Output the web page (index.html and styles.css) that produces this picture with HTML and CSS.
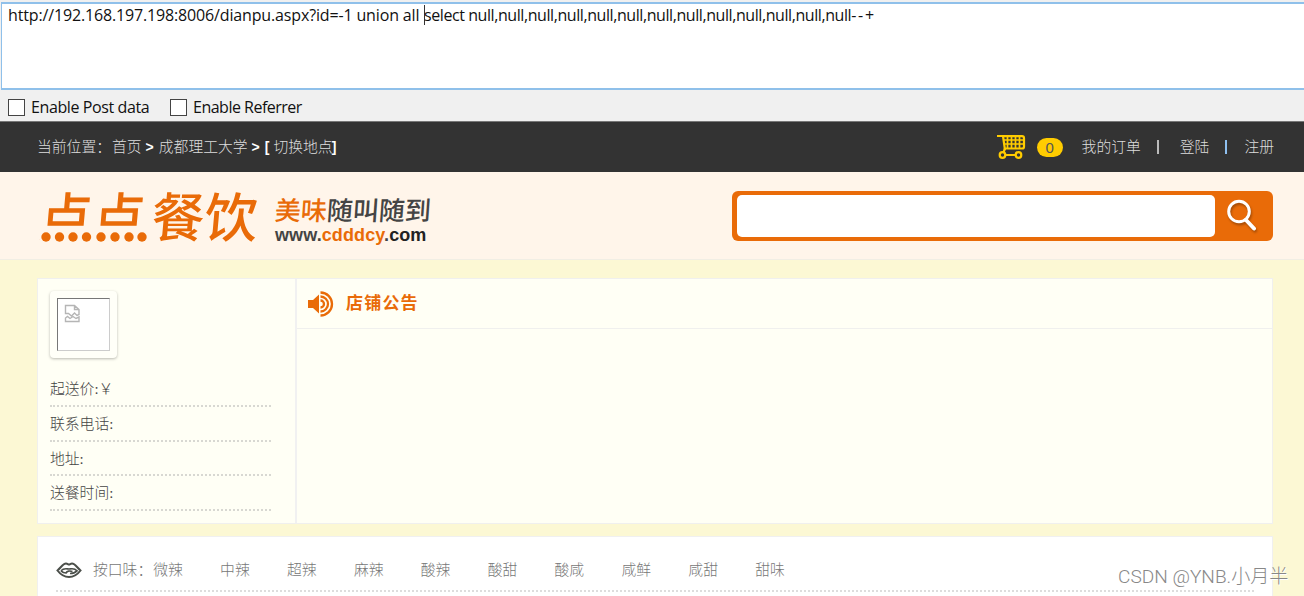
FILE: index.html
```html
<!DOCTYPE html>
<html lang="zh-CN">
<head>
  <meta charset="UTF-8" />
  <meta name="viewport" content="width=device-width, initial-scale=1.0"/>
  <title>点点餐饮</title>
  <link rel="stylesheet" href="styles.css">
</head>
<body>
  <div class="toolbar">
    <div class="url-box"><span class="url-start">http://192.168.197.198:8006/dianpu.aspx?id=-1 union all </span><span class="caret"></span><span class="url-end">select null,null,null,null,null,null,null,null,null,null,null,null,null<span class="dashes">--+</span></span></div>
    <div class="options">
      <label class="option post"><span class="box"></span>Enable Post data</label>
      <label class="option referrer"><span class="box"></span>Enable Referrer</label>
    </div>
  </div>

  <div class="topbar">
    <div class="crumbs">当前位置：<a class="home">首页</a><b>&gt;</b><a>成都理工大学</a><b>&gt;</b><b class="bracket">[</b><a>切换地点</a><b class="bracket-end">]</b></div>
    <div class="account">
      <svg class="cart" width="30" height="26" viewBox="0 0 30 26" fill="none" stroke="#fc0">
        <path d="M1 2h6l2 14M6 2.200h20q2 0 2 2v8.500q0 1.800-2 1.800H9" stroke-width="2.200"/>
        <path d="M11.500 3v11M15.500 3v11M19.500 3v11M23.500 3v11M8 6h19M8 10h19" stroke-width="1.700"/>
        <path d="M9 14.500l-1.500 4M9 21h11" stroke-width="2.200"/>
        <circle cx="6.500" cy="21" r="2.800" stroke-width="2.200"/>
        <circle cx="22.500" cy="21" r="2.800" stroke-width="2.200"/>
      </svg>
      <span class="count">0</span>
      <a class="orders">我的订单</a>
      <i class="sep"></i>
      <a class="login">登陆</a>
      <i class="sep blue"></i>
      <a>注册</a>
    </div>
  </div>

  <div class="header">
    <div class="logo">
      <div class="brand">
        <span class="dian">点点</span>
        <span class="canyin">餐饮</span>
        <svg class="dots" width="112" height="18" viewBox="0 0 112 18" fill="#e96b08">
          <circle cx="6" cy="9" r="4.700"/><circle cx="19.500" cy="9" r="4.700"/><circle cx="33" cy="9" r="4.700"/><circle cx="46.500" cy="9" r="4.700"/>
          <circle cx="61" cy="9" r="4.700"/><circle cx="75" cy="9" r="4.700"/><circle cx="89" cy="9" r="4.700"/><circle cx="102" cy="9" r="4.700"/>
        </svg>
      </div>
      <div class="slogan">
        <div class="words"><em>美味</em>随叫随到</div>
        <div class="site">www.<em>cdddcy</em>.<b>com</b></div>
      </div>
    </div>
    <div class="search">
      <div class="field"></div>
      <svg class="glass" width="40" height="40" viewBox="0 0 40 40" fill="none" stroke="#fff">
        <circle cx="14" cy="16.500" r="10.300" stroke-width="3"/>
        <path d="M21 25l8 8.500" stroke-width="4" stroke-linecap="round"/>
      </svg>
    </div>
  </div>

  <div class="shop">
    <div class="info">
      <div class="photo">
        <div class="frame">
          <svg width="17" height="19" viewBox="0 0 17 19" fill="none" stroke="#b5b5b5" stroke-width="1.400">
            <path d="M1.500 9.500V1.500h9l4.500 4v5l-2 1-2.500-2.500-3 3-3-2.500zM10.500 1.500v4H15"/>
            <path d="M1.500 14l2-1.500 2.500 2 3-2 3 2 3-1.500v4.500H1.500z"/>
          </svg>
        </div>
      </div>
      <div class="line">起送价:￥</div>
      <div class="line">联系电话:</div>
      <div class="line">地址:</div>
      <div class="line">送餐时间:</div>
    </div>
    <div class="notice">
      <div class="notice-title">
        <svg width="28" height="26" viewBox="0 0 28 26" fill="none" stroke="#e96b08">
          <path d="M1 9h5l6-5.500v19L6 17H1z" fill="#e96b08" stroke="none"/>
          <path d="M13.500 9.500a3.500 3.500 0 0 1 0 7M13.500 5.500a7.500 7.500 0 0 1 0 15M13.500 1.500a11.500 11.500 0 0 1 0 23" stroke-width="2.300"/>
        </svg>
        <span>店铺公告</span>
      </div>
    </div>
  </div>

  <div class="tastes">
    <div class="taste-row">
      <svg class="lips" width="26" height="20" viewBox="0 0 26 20" fill="none" stroke="#4b4f4a">
        <path d="M1.500 10.500C5 7.500 7 3.500 10 3.500c1.500 0 2 1 3 1s1.500-1 3-1c3 0 5 4 8.500 7-3 4-7 6.500-11.500 6.500S4.500 14.500 1.500 10.500z" stroke-width="2"/>
        <path d="M5 10.800C8 7.500 11 9 13 9s5-1.500 8 1.800c-2 2-4 2.700-7 2.700M5 10.800c2 2 3 2.200 5 2.200 1-2 4-2.500 6.500-1.500" stroke-width="1.700"/>
      </svg>
      <span class="taste-label">按口味：</span>
      <div class="taste-list"><a>微辣</a><a>中辣</a><a>超辣</a><a>麻辣</a><a>酸辣</a><a>酸甜</a><a>酸咸</a><a>咸鲜</a><a>咸甜</a><a>甜味</a></div>
    </div>
  </div>
  <div class="watermark">CSDN @YNB.小月半</div>
</body>
</html>
```
FILE: styles.css
```css
* {
  box-sizing: border-box;
}

body {
  margin: 0;
  height: 596px;
  overflow: hidden;
  position: relative;
  background: #fcf8d4;
  color: #444;
  font: 300 14.8px/20px "Liberation Serif", "Noto Sans CJK SC", serif;
}

svg {
  display: block;
  flex: none;
}

em, i {
  font-style: normal;
}

/* url panel */
.toolbar {
  height: 122px;
  padding: 2px 0 0 1px;
  background: #f0f0f0;
  border-bottom: 1px solid #777;
  color: #111;
  font: 400 16px/22px "Open Sans", sans-serif;
}

.url-box {
  display: flex;
  height: 88px;
  padding: 0 0 0 6px;
  background: #fff;
  border: 2px solid #8fc0ea;
  border-left-width: 1px;
  border-right: 0;
  white-space: pre;
}

.url-start {
  width: 416px;
  letter-spacing: -0.15px;
}

.url-end {
  letter-spacing: -0.42px;
}

.dashes {
  letter-spacing: 1.8px;
}

.caret {
  width: 1px;
  height: 20px;
  margin: 1px -1px 0 0;
  background: #333;
}

.options {
  display: flex;
  padding: 6px 0 0 7px;
  letter-spacing: -0.4px;
}

.option {
  display: flex;
  align-items: center;
  gap: 6px;
}

.post {
  width: 162px;
}

.referrer {
  letter-spacing: -0.5px;
}

.box {
  width: 17px;
  height: 17px;
  background: #fff;
  border: 1px solid #444;
}

/* dark bar */
.topbar {
  display: flex;
  justify-content: space-between;
  height: 50px;
  padding: 0 30px 0 37px;
  background: #333;
  color: #ddd;
  align-items: center;
}

.crumbs {
  display: flex;
}

.crumbs .home {
  margin-left: 1px;
}

.crumbs b {
  margin: 0 5px 0 4px;
  color: #fff;
  font: 700 14px/20px "Liberation Sans", sans-serif;
}

.crumbs .bracket {
  margin-left: 0;
  margin-right: 4px;
}

.crumbs .bracket-end {
  margin: 0 0 0 -1px;
}

.account {
  display: flex;
  align-items: center;
}

.count {
  width: 26px;
  height: 19px;
  margin: 0 19px 0 11px;
  border-radius: 10px;
  background: #fc0;
  color: #555;
  font: 400 15px/19px "Liberation Sans", sans-serif;
  text-align: center;
}

.orders {
  margin-right: 16px;
}

.sep {
  width: 2px;
  height: 14px;
  margin-right: 21px;
  background: #bbb;
}

.sep.blue {
  margin: 0 17px 0 16px;
  background: #8fc0f0;
}

/* logo and search */
.header {
  display: flex;
  justify-content: space-between;
  height: 88px;
  padding: 19px 31px 0 40px;
  background: #fff5ea;
  border-bottom: 1px solid #f1eee4;
}

.logo {
  display: flex;
  gap: 15px;
  color: #e96b08;
  font-family: "Noto Sans CJK SC", sans-serif;
}

.brand {
  display: flex;
  position: relative;
  width: 220px;
  height: 52px;
  margin-top: -3px;
  font-size: 53px;
  font-weight: 500;
  line-height: 52px;
}

.dian {
  width: 112px;
}

.dian,
.canyin {
  display: block;
  transform: skewX(-5deg);
}

.dots {
  position: absolute;
  left: 0;
  top: 40px;
  background: #fff5ea;
}

.slogan {
  padding-top: 3px;
  color: #444;
}

.words {
  font-size: 26px;
  font-weight: 500;
  line-height: 30px;
  white-space: nowrap;
  transform: skewX(-4deg);
}

.site {
  font: 700 18px/22px "Liberation Sans", sans-serif;
  letter-spacing: 0.1px;
}

.site b {
  color: #222;
}

.slogan em {
  color: #e96b08;
}

.search {
  display: flex;
  width: 541px;
  height: 50px;
  padding: 4px 5px;
  border-radius: 6px;
  background: #e96b08;
}

.field {
  width: 478px;
  height: 42px;
  border-radius: 5px;
  background: #fff;
}

.glass {
  margin-left: 10px;
  filter: drop-shadow(1px 2px 1px rgba(0, 0, 0, 0.3));
}

/* shop card */
.shop {
  display: flex;
  width: 1236px;
  height: 246px;
  margin: 18px 0 12px 37px;
  background: #fffff5;
  border: 1px solid #f0f0ee;
}

.info {
  width: 259px;
  padding: 12px 0 0 12px;
  border-right: 2px solid #f1f1f1;
}

.photo {
  width: 67px;
  height: 67px;
  margin-bottom: 14px;
  padding: 7px;
  border-radius: 4px;
  background: #fffff8;
  box-shadow: 0 1px 3px rgba(0, 0, 0, 0.28);
}

.frame {
  width: 53px;
  height: 53px;
  padding: 5px 6px;
  background: #fff;
  border: 1px solid #ccc;
  border-top-color: #777;
  border-left-color: #777;
}

.line {
  width: 221px;
  height: 34.8px;
  padding-top: 7px;
  border-bottom: 2px dotted #d8d8d2;
}

.notice {
  flex: 1;
}

.notice-title {
  display: flex;
  align-items: center;
  gap: 11px;
  height: 50px;
  padding-left: 10px;
  border-bottom: 1px solid #f0f0ee;
  color: #e96b08;
  font-size: 17px;
  font-weight: 700;
  letter-spacing: 1.2px;
}

/* taste filter */
.tastes {
  width: 1236px;
  height: 80px;
  margin-left: 37px;
  padding: 12px 18px 0 18px;
  background: #fff;
  border: 1px solid #f0f0f0;
}

.taste-row {
  display: flex;
  align-items: center;
  height: 43px;
  border-bottom: 2px dotted #ddd;
  color: #777;
}

.taste-label {
  margin-left: 11px;
}

.taste-list {
  display: flex;
  margin-left: 1px;
}

.taste-list a {
  width: 66.9px;
}

.watermark {
  position: absolute;
  left: 1118px;
  top: 565px;
  color: #888;
  font: 300 19.1px/24px Roboto, "Noto Sans CJK SC", sans-serif;
  text-shadow: 1px 1px 0 #fff;
  white-space: nowrap;
}
```
